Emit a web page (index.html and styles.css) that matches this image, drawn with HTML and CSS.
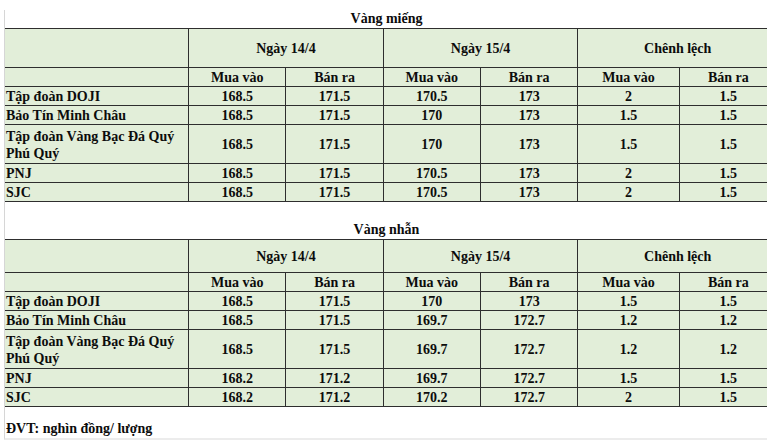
FILE: index.html
```html
<!DOCTYPE html>
<html lang="vi">
<head>
<meta charset="utf-8">
<title>Giá vàng</title>
<link rel="stylesheet" href="styles.css">
</head>
<body>
<div class="sheet">
  <div class="title first">Vàng miếng</div>
  <table class="price">
    <colgroup>
      <col class="c-name"><col class="c-n"><col class="c-n"><col class="c-n"><col class="c-n"><col class="c-w"><col class="c-last">
    </colgroup>
    <tr class="h1"><td></td><td colspan="2">Ngày 14/4</td><td colspan="2">Ngày 15/4</td><td colspan="2">Chênh lệch</td></tr>
    <tr class="h2"><td></td><td>Mua vào</td><td>Bán ra</td><td>Mua vào</td><td>Bán ra</td><td>Mua vào</td><td>Bán ra</td></tr>
    <tr><td class="name">Tập đoàn DOJI</td><td>168.5</td><td>171.5</td><td>170.5</td><td>173</td><td>2</td><td>1.5</td></tr>
    <tr><td class="name">Bảo Tín Minh Châu</td><td>168.5</td><td>171.5</td><td>170</td><td>173</td><td>1.5</td><td>1.5</td></tr>
    <tr class="tall"><td class="name">Tập đoàn Vàng Bạc Đá Quý Phú Quý</td><td>168.5</td><td>171.5</td><td>170</td><td>173</td><td>1.5</td><td>1.5</td></tr>
    <tr><td class="name">PNJ</td><td>168.5</td><td>171.5</td><td>170.5</td><td>173</td><td>2</td><td>1.5</td></tr>
    <tr><td class="name">SJC</td><td>168.5</td><td>171.5</td><td>170.5</td><td>173</td><td>2</td><td>1.5</td></tr>
  </table>

  <div class="title second">Vàng nhẫn</div>
  <table class="price">
    <colgroup>
      <col class="c-name"><col class="c-n"><col class="c-n"><col class="c-n"><col class="c-n"><col class="c-w"><col class="c-last">
    </colgroup>
    <tr class="h1 short"><td></td><td colspan="2">Ngày 14/4</td><td colspan="2">Ngày 15/4</td><td colspan="2">Chênh lệch</td></tr>
    <tr class="h2"><td></td><td>Mua vào</td><td>Bán ra</td><td>Mua vào</td><td>Bán ra</td><td>Mua vào</td><td>Bán ra</td></tr>
    <tr><td class="name">Tập đoàn DOJI</td><td>168.5</td><td>171.5</td><td>170</td><td>173</td><td>1.5</td><td>1.5</td></tr>
    <tr><td class="name">Bảo Tín Minh Châu</td><td>168.5</td><td>171.5</td><td>169.7</td><td>172.7</td><td>1.2</td><td>1.2</td></tr>
    <tr class="tall"><td class="name">Tập đoàn Vàng Bạc Đá Quý Phú Quý</td><td>168.5</td><td>171.5</td><td>169.7</td><td>172.7</td><td>1.2</td><td>1.2</td></tr>
    <tr><td class="name">PNJ</td><td>168.2</td><td>171.2</td><td>169.7</td><td>172.7</td><td>1.5</td><td>1.5</td></tr>
    <tr><td class="name">SJC</td><td>168.2</td><td>171.2</td><td>170.2</td><td>172.7</td><td>2</td><td>1.5</td></tr>
  </table>

  <div class="note">ĐVT: nghìn đồng/ lượng</div>
</div>
</body>
</html>
```

FILE: styles.css
```css
html, body {
  margin: 0;
  padding: 0;
  background: #ffffff;
  overflow: hidden;
}

body {
  width: 767px;
  height: 443px;
  font-family: "Liberation Serif", "Times New Roman", serif;
  font-weight: bold;
  font-size: 14px;
  color: #0c0c0c;
}

.sheet {
  margin: 10px 0 0 4px;
  height: 428px;
  border-left: 1px solid #d6d6d6;
  border-bottom: 2px solid #ececec;
  overflow: hidden;
}

.title {
  text-align: center;
  line-height: 18px;
  height: 18px;
  width: 763px;
}

.title.second {
  padding-top: 19px;
}

.price {
  border-collapse: collapse;
  table-layout: fixed;
  width: 773px;
  background: #e2eed9;
}

.c-name { width: 183px; }
.c-n { width: 97px; }
.c-w { width: 101px; }
.c-last { width: 98px; }

.price td {
  border: 1px solid #2e2e2e;
  padding: 1px 1px 0;
  text-align: center;
  line-height: 17px;
  height: 17px;
  vertical-align: middle;
}

.price tr td:first-child {
  border-left: none;
}

.price tr.h1 td {
  height: 37px;
}

.price tr.h1.short td {
  height: 31px;
}

.price tr.tall td {
  height: 37px;
}

.price td.name {
  text-align: left;
}

.note {
  padding: 13px 0 0 1px;
  line-height: 18px;
}
```
